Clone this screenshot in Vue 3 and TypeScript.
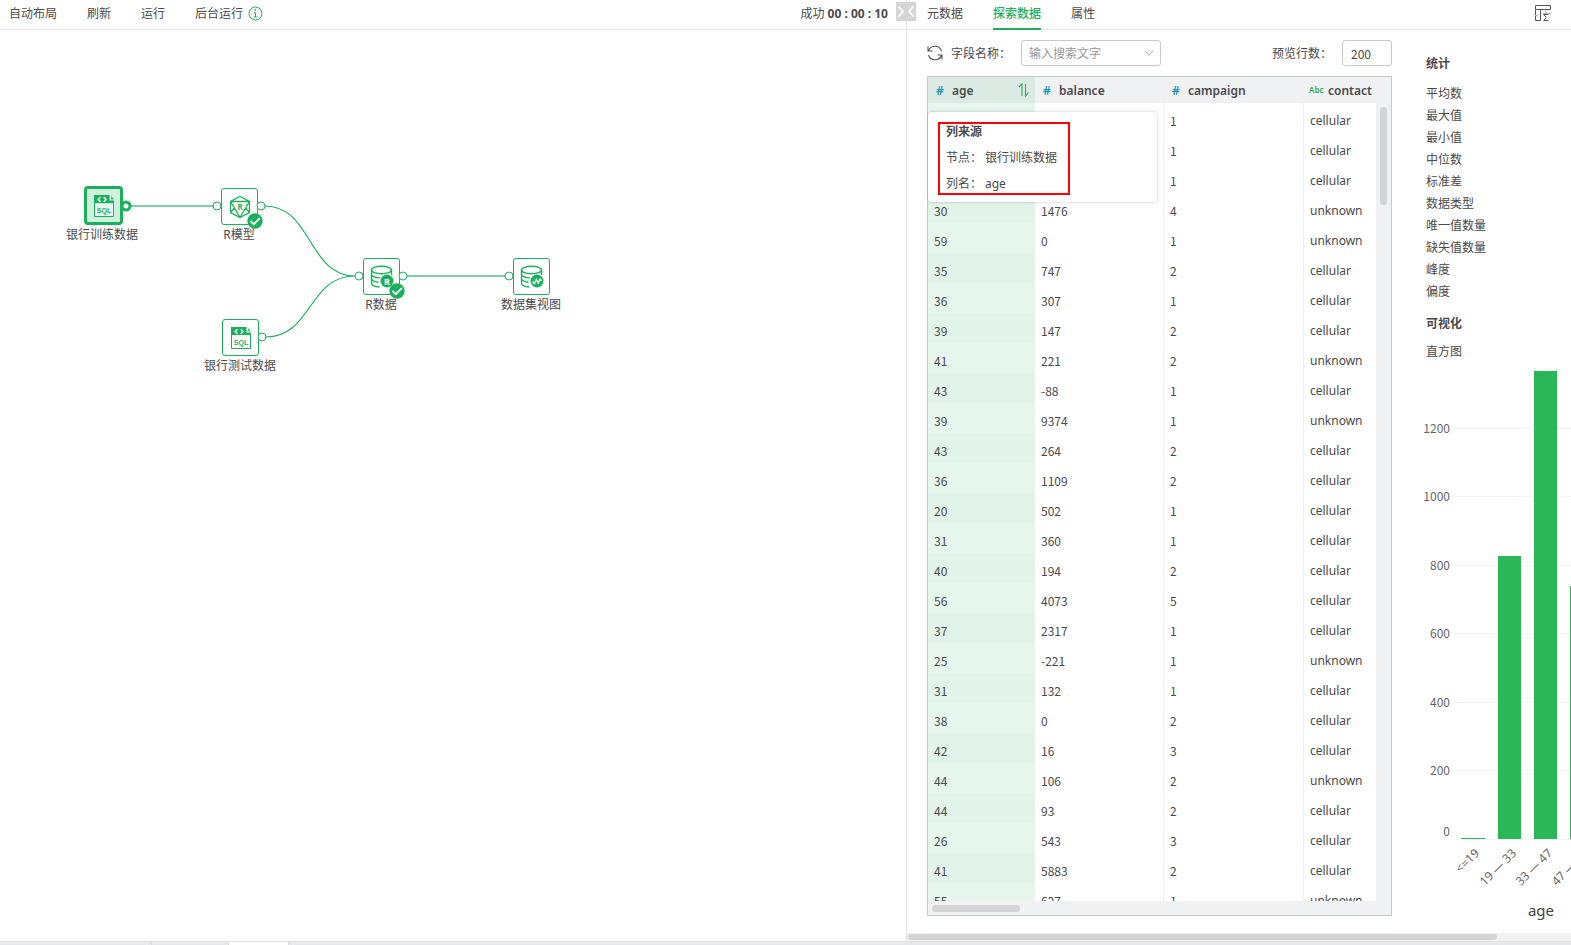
<script setup lang="ts">
import { ref } from 'vue'

type NodeKind = 'sql' | 'model' | 'rdata' | 'view'
interface FlowNode { id: number; kind: NodeKind; label: string; x: number; y: number; selected?: boolean; done?: boolean }

const nodes: FlowNode[] = [
  { id: 1, kind: 'sql', label: '银行训练数据', x: 84, y: 156, selected: true },
  { id: 2, kind: 'model', label: 'R模型', x: 221, y: 158, done: true },
  { id: 3, kind: 'rdata', label: 'R数据', x: 363, y: 228, done: true },
  { id: 4, kind: 'view', label: '数据集视图', x: 513, y: 228 },
  { id: 5, kind: 'sql', label: '银行测试数据', x: 222, y: 289 },
]
const ports = [[217, 176], [261, 176], [359, 246], [403, 246], [509, 246], [262, 307]]

const tools = ['自动布局', '刷新', '运行']
const tabs = ['元数据', '探索数据', '属性']
const activeTab = ref('探索数据')
const rowCount = ref('200')
const keyword = ref('')

const rows: [string, string, string, string][] = [
  ['', '', '1', 'cellular'],
  ['', '', '1', 'cellular'],
  ['', '', '1', 'cellular'],
  ['30', '1476', '4', 'unknown'],
  ['59', '0', '1', 'unknown'],
  ['35', '747', '2', 'cellular'],
  ['36', '307', '1', 'cellular'],
  ['39', '147', '2', 'cellular'],
  ['41', '221', '2', 'unknown'],
  ['43', '-88', '1', 'cellular'],
  ['39', '9374', '1', 'unknown'],
  ['43', '264', '2', 'cellular'],
  ['36', '1109', '2', 'cellular'],
  ['20', '502', '1', 'cellular'],
  ['31', '360', '1', 'cellular'],
  ['40', '194', '2', 'cellular'],
  ['56', '4073', '5', 'cellular'],
  ['37', '2317', '1', 'cellular'],
  ['25', '-221', '1', 'unknown'],
  ['31', '132', '1', 'cellular'],
  ['38', '0', '2', 'cellular'],
  ['42', '16', '3', 'cellular'],
  ['44', '106', '2', 'unknown'],
  ['44', '93', '2', 'cellular'],
  ['26', '543', '3', 'cellular'],
  ['41', '5883', '2', 'cellular'],
  ['55', '627', '1', 'unknown'],
]

const stats = ['平均数', '最大值', '最小值', '中位数', '标准差', '数据类型', '唯一值数量', '缺失值数量', '峰度', '偏度']

const baseline = 471
const ticks = [
  { v: 1200, y: 60 }, { v: 1000, y: 128 }, { v: 800, y: 197 },
  { v: 600, y: 265 }, { v: 400, y: 334 }, { v: 200, y: 402 },
]
const bars = [
  { label: '<=19', x: 35, w: 24, h: 1 },
  { label: '19 — 33', x: 72, w: 23, h: 283 },
  { label: '33 — 47', x: 108, w: 23, h: 468 },
  { label: '47 — 61', x: 144, w: 23, h: 253 },
]
</script>

<template>
  <div class="app">
    <main class="split">
      <section class="flow">
        <header class="bar">
          <button v-for="t in tools" :key="t" class="tool">{{ t }}</button>
          <button class="tool">
            后台运行
            <svg class="info" width="15" height="15" viewBox="0 0 15 15" fill="none" stroke="#27ae60">
              <circle cx="7.5" cy="7.5" r="6.5" />
              <path d="M6 6.5h1.5v4.5M6 11h3.5" />
              <circle cx="7.3" cy="3.9" r=".6" fill="#27ae60" />
            </svg>
          </button>
          <p class="status">成功 <b>00 : 00 : 10</b></p>
        </header>
        <button class="collapse" aria-label="收起">
          <svg width="20" height="19" viewBox="0 0 20 19" fill="none" stroke="#fff" stroke-width="1.8">
            <path d="M2.5 4.500l4.500 5-4.500 5M17.500 4.500l-4.500 5 4.500 5" />
          </svg>
        </button>
        <div class="canvas">
          <div
            v-for="n in nodes" :key="n.id" class="node" :class="{ selected: n.selected }"
            :style="{ left: n.x + 'px', top: n.y + 'px' }"
          >
            <button class="tile" :aria-label="n.label">
              <svg v-if="n.kind === 'sql'" width="20" height="22" viewBox="0 0 20 22">
                <path d="M0 0h15.500v5.500h4.500v3H0z" fill="#1bb15c" />
                <path d="M17 .5l3 4h-3z" fill="#1bb15c" fill-opacity=".75" />
                <path d="M.5 8v13.500h19V8" fill="#fff" :fill-opacity="n.selected ? 0.5 : 1" stroke="#1bb15c" />
                <path d="M6.500 2.200L4.200 4.500l2.300 2.200M9.700 2.200l2.300 2.300-2.300 2.200" fill="none" stroke="#fff" stroke-width="1.300" />
                <text x="10" y="18" text-anchor="middle" class="sql">SQL</text>
              </svg>
              <svg v-else-if="n.kind === 'model'" width="22" height="24" viewBox="0 0 22 24" fill="none" stroke="#1bb15c" stroke-width="1.300">
                <path d="M11 1.500l9.500 5v11L11 22.500l-9.500-5v-11zM1.500 6.500h19L11 22.500zM1.500 17.500l4-4.500M20.500 17.500l-4-4.500" />
                <text x="11" y="15" text-anchor="middle" class="r">R</text>
              </svg>
              <svg v-else width="24" height="24" viewBox="0 0 24 24" fill="none" stroke="#1bb15c" stroke-width="1.400">
                <ellipse cx="11.500" cy="5" rx="10" ry="3.800" />
                <path d="M1.500 5v13c0 2 3.500 3.700 8 4M1.500 9.500c1 2 4 3.200 8.500 3.400M1.500 14c1 1.900 3.500 3 7 3.300M21.500 5v5" />
                <circle cx="17" cy="16" r="6.500" fill="#1bb15c" stroke="none" />
                <text v-if="n.kind === 'rdata'" x="17" y="19.500" text-anchor="middle" class="r light">R</text>
                <path v-else d="M12.500 16.500l2 2 1.800-4 2 3.500 1.800-4 1.500 2" stroke="#fff" stroke-width="1.300" />
              </svg>
            </button>
            <span class="caption">{{ n.label }}</span>
            <svg v-if="n.done" class="badge" width="16" height="16" viewBox="0 0 16 16">
              <circle cx="8" cy="8" r="7.700" fill="#1bb15c" />
              <path d="M3.500 8l3.200 3.200L12.700 5.200" fill="none" stroke="#fff" stroke-width="1.800" />
            </svg>
          </div>
          <svg class="edges" width="600" height="400" viewBox="0 0 600 400" fill="none" stroke="#1bb15c">
            <path d="M131 176H213M407 246H505" stroke="#7cd0a1" stroke-width="2" />
            <path d="M265 176C312 176 308 246 355 246M266 307C312 307 308 246 355 246" stroke-width="1.200" />
            <circle v-for="p in ports" :key="p.join()" :cx="p[0]" :cy="p[1]" r="4" fill="#fff" />
            <circle cx="126" cy="176" r="4" fill="#fff" stroke-width="3" />
          </svg>
        </div>
      </section>

      <section class="detail">
        <nav class="bar tabs">
          <button v-for="t in tabs" :key="t" class="tab" :class="{ active: t === activeTab }" @click="activeTab = t">{{ t }}</button>
          <button class="summary" aria-label="统计">
            <svg width="18" height="18" viewBox="0 0 18 18" fill="none" stroke="#555">
              <path d="M1.500 1.500h15v4h-15zM1.500 5.500v11h5v-11" />
              <path d="M1 11.500h3M12 6v3M9 9.500h8" stroke="#bbb" />
              <path d="M14.500 10.500h-5l3 3-3 3h5" />
            </svg>
          </button>
        </nav>

        <div class="body">
          <div class="explore">
            <div class="filters">
              <button class="refresh" aria-label="刷新">
                <svg width="16" height="16" viewBox="0 0 16 16" fill="none" stroke="#555" stroke-width="1.100">
                  <path d="M1.500 6A6.800 6.800 0 0 1 14.500 6M14.500 10A6.800 6.800 0 0 1 1.500 10M1 1.500V6h4.500M15 14.500V10h-4.500" />
                </svg>
              </button>
              <label for="field">字段名称：</label>
              <span class="combo">
                <select id="field" v-model="keyword"><option value="">输入搜索文字</option></select>
                <svg width="10" height="7" viewBox="0 0 10 7" fill="none" stroke="#aaa"><path d="M1 1l4 4.500L9 1" /></svg>
              </span>
              <label for="count" class="count-label">预览行数：</label>
              <input id="count" v-model="rowCount" type="text">
            </div>

            <div class="grid">
              <div class="view">
                <table>
                  <colgroup><col class="c1"><col class="c2"><col class="c3"><col class="c4"></colgroup>
                  <thead>
                    <tr>
                      <th scope="col" class="sorted">
                        <div class="head"><i>#</i>age
                          <svg width="12" height="14" viewBox="0 0 12 14" fill="none" stroke="#35a867" stroke-width="1.100">
                            <path d="M1 4l3-3v12M7.500 1v12l3-3.500" />
                          </svg>
                        </div>
                      </th>
                      <th scope="col"><div class="head"><i>#</i>balance</div></th>
                      <th scope="col"><div class="head"><i>#</i>campaign</div></th>
                      <th scope="col"><div class="head text"><i>Abc</i>contact</div></th>
                    </tr>
                  </thead>
                  <tbody>
                    <tr v-for="(r, i) in rows" :key="i"><td v-for="(c, j) in r" :key="j">{{ c }}</td></tr>
                  </tbody>
                </table>
              </div>
              <div class="gutter"><div class="thumb"></div></div>
              <div class="hscroll"><div class="thumb"></div></div>
              <div class="tip" role="tooltip">
                <dl>
                  <div><dt class="title">列来源</dt></div>
                  <div><dt>节点：</dt><dd>银行训练数据</dd></div>
                  <div><dt>列名：</dt><dd>age</dd></div>
                </dl>
              </div>
            </div>
          </div>

          <aside class="stats">
            <h3>统计</h3>
            <ul><li v-for="s in stats" :key="s">{{ s }}</li></ul>
            <h3>可视化</h3>
            <p>直方图</p>
            <svg class="chart" width="230" height="560" viewBox="0 0 230 560">
              <g class="ticks">
                <template v-for="t in ticks" :key="t.v">
                  <rect x="29" :y="t.y" width="201" height="1" />
                  <text x="24" :y="t.y + 5" text-anchor="end">{{ t.v }}</text>
                </template>
                <rect x="29" :y="baseline" width="201" height="1" />
                <text x="24" :y="baseline - 3" text-anchor="end">0</text>
              </g>
              <g v-for="b in bars" :key="b.label">
                <rect :x="b.x" :y="baseline - b.h" :width="b.w" :height="b.h" fill="#2bb757" />
                <text
                  class="cat" text-anchor="end"
                  :transform="`translate(${b.x + 19} ${baseline + 15}) rotate(-45)`"
                >{{ b.label }}</text>
              </g>
              <text class="axis" x="115" y="548" text-anchor="middle">age</text>
            </svg>
          </aside>
        </div>
        <div class="pan"><div class="thumb"></div></div>
      </section>
    </main>
    <footer><span class="s1"></span><span class="s2"></span><span class="s3"></span></footer>
  </div>
</template>

<style>
body { margin: 0; overflow: hidden; }
</style>

<style scoped>
* { box-sizing: border-box; }
.app {
  display: flex; flex-direction: column; height: 100vh; background: #fff; color: #4a4a4a;
  font: 12px/18px "Noto Sans", "Noto Sans CJK SC", sans-serif;
}
button, input, select { font: inherit; color: inherit; }
button { padding: 0; border: 0; background: none; cursor: pointer; }
h3, p, ul, dl, dd { margin: 0; padding: 0; }
svg { flex: none; }
.split { flex: 1; min-height: 0; display: grid; grid-template-columns: minmax(0, 906fr) minmax(0, 665fr); }
.flow { position: relative; display: flex; flex-direction: column; min-width: 0; }
.bar { flex: none; display: flex; align-items: center; height: 30px; padding-bottom: 2px; border-bottom: 1px solid #e6e7e9; }
.flow .bar { padding-left: 9px; gap: 30px; }
.tool { display: flex; align-items: center; gap: 5px; }
.status { margin-left: auto; padding-right: 18px; }
.collapse { position: absolute; right: -10px; top: 2px; width: 20px; height: 19px; background: #d5d5d5; z-index: 2; }
.collapse svg { display: block; }
.canvas { position: relative; flex: 1; }
.node { position: absolute; width: 37px; }
.tile {
  display: flex; align-items: center; justify-content: center; width: 37px; height: 37px;
  border: 1px solid #1bb15c; border-radius: 3px; background: #fff;
}
.selected { width: 39px; }
.selected .tile { width: 39px; height: 39px; border-width: 3px; border-radius: 4px; background: #d1efde; }
.caption { display: block; width: 90px; margin: 1px -27px 0; text-align: center; }
.badge { position: absolute; left: 26px; top: 25px; z-index: 1; }
.edges { position: absolute; left: 0; top: 0; pointer-events: none; }
.sql { font: 700 7px "Liberation Sans", sans-serif; fill: #1bb15c; }
.r { font: 700 8px "Noto Sans", sans-serif; fill: #1bb15c; stroke: none; }
.light { font-size: 9px; fill: #fff; }

.detail { display: flex; flex-direction: column; min-width: 0; overflow: hidden; border-left: 1px solid #e4e5e7; }
.tabs { padding-left: 20px; gap: 30px; align-items: stretch; padding-bottom: 0; }
.tab { height: 30px; border-bottom: 2px solid transparent; }
.active { color: #1bb15c; font-weight: 500; border-bottom-color: #1bb15c; }
.summary { margin: -3px 19px 0 auto; display: flex; align-items: center; }
.body { flex: 1; min-height: 0; width: 750px; display: flex; padding: 10px 0 17px 20px; }
.explore { width: 465px; flex: none; display: flex; flex-direction: column; }
.filters { display: flex; align-items: center; height: 26px; margin-bottom: 10px; }
.refresh { display: flex; width: 16px; margin: 0 8px 0 0; }
.filters label { padding-top: 2px; }
.combo { position: relative; width: 140px; margin-left: 10px; }
.combo svg { position: absolute; right: 7px; top: 10px; pointer-events: none; }
select, input { height: 26px; border: 1px solid #c8c9cb; border-radius: 3px; background: #fff; }
select { display: block; width: 100%; padding: 1px 7px 0; appearance: none; color: #999; }
.count-label { margin-left: auto; }
input { width: 50px; margin-left: 10px; padding: 0 8px; font-family: "Noto Sans CJK SC", sans-serif; }

.grid {
  position: relative; flex: 1; min-height: 0; display: grid;
  grid-template: minmax(0, 1fr) 14px / minmax(0, 1fr) 15px;
  border: 1px solid #c8c9cb; background: #f0f1f3;
}
.view { overflow: hidden; }
table { width: 100%; table-layout: fixed; border-collapse: separate; border-spacing: 0; }
.c1 { width: 107px; } .c2 { width: 129px; } .c3 { width: 140px; }
th { height: 26px; padding: 2px 0 0 8px; text-align: left; font-weight: 600; background: #f0f1f3; }
th.sorted { background: #dbebe4; }
.head { display: flex; align-items: center; }
.head i { width: 16px; font-style: normal; color: #2495b8; }
.head svg { margin: -2px 5px 0 auto; }
.head.text { margin-left: -3px; }
.head.text i { width: 19px; font-size: 8px; line-height: 14px; padding-bottom: 2px; color: #27ae60; }
td { height: 30px; padding: 5px 0 0 6px; background: #fff; border-right: 1px solid #f0f1f3; white-space: nowrap; }
td:first-child { background: #e6f6ed; }
tr:nth-child(even) td:first-child { background: #e2f3e9; }
td:nth-child(1), td:nth-child(2), td:nth-child(3) { font-family: "Noto Sans CJK SC", sans-serif; }
td:last-child { padding-top: 6px; }
td:first-child, td:last-child { border-right: 0; }
.thumb { background: #d4d4d4; border-radius: 4px; }
.gutter { padding: 30px 4px; }
.gutter .thumb { height: 98px; width: 7px; }
.hscroll { padding: 4px; }
.hscroll .thumb { width: 88px; height: 7px; }
.tip {
  position: absolute; left: 0; top: 35px; width: 229px; height: 90px; padding: 10px;
  background: #fff; border-radius: 4px; box-shadow: 0 0 3px rgba(0, 0, 0, .25);
}
.tip dl { width: 132px; height: 73px; border: 2px solid #f00; padding-left: 6px; }
.tip dl > div { display: flex; height: 26px; line-height: 16px; }
.tip dt { width: 39px; }
.tip .title { font-weight: 700; }
.stats { flex: none; width: 230px; margin-left: 34px; padding-top: 13px; }
h3 { font-size: 12px; line-height: 22px; font-weight: 700; }
ul { list-style: none; margin: 8px 0 10px; }
li { line-height: 22px; }
.stats p { line-height: 22px; margin-top: 6px; }
.chart { display: block; margin-top: 5px; overflow: visible; }
.ticks rect { fill: #f3f3f3; }
.ticks text { font: 12px "Noto Sans CJK SC", sans-serif; fill: #666; }
.cat { font-size: 12px; fill: #666; }
.axis { font-size: 15px; fill: #444; }
.pan { flex: none; height: 8px; padding: 1px; background: #f0f1f3; }
.pan .thumb { width: 89%; height: 6px; }
footer { flex: none; display: flex; height: 4px; background: #e7e8ea; border-top: 1px solid #e2e2e2; }
footer span { border-right: 1px solid #ddd; }
.s1 { width: 152px; } .s2 { width: 77px; } .s3 { width: 60px; background: #fff; }
</style>
